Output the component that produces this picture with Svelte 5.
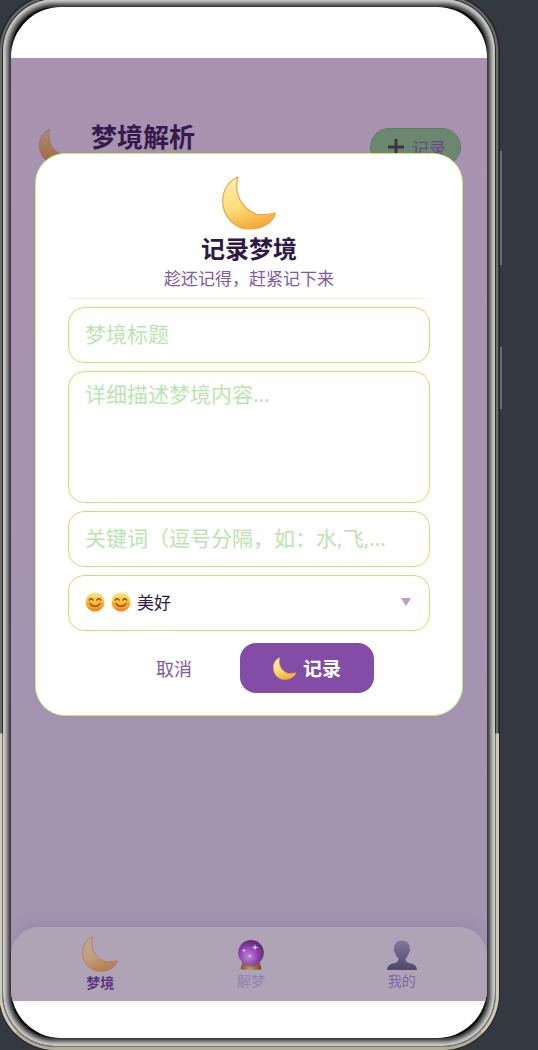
<script lang="ts">
  let title = $state('');
  let content = $state('');
  let keywords = $state('');
  let mood = $state('good');

  const moods = [
    { value: 'good', label: '美好' },
    { value: 'calm', label: '平静' },
    { value: 'scary', label: '恐惧' },
  ];

  const tabs = [
    { id: 'dream', label: '梦境' },
    { id: 'explain', label: '解梦' },
    { id: 'mine', label: '我的' },
  ];

  let active = $state('dream');
</script>

{#snippet moon(fill: string, edge: string)}
  <svg class="moon" viewBox="0 0 54 54" aria-hidden="true">
    <path
      d="M16 1C6 5 .7 15 .7 25 .7 41 13 53 28 53c13 0 23-7 25.500-16C47 38.500 40 39.500 34 38 20 33 11 17 16 1Z"
      fill="url(#{fill})"
      stroke={edge}
      stroke-width="1.200"
      stroke-linejoin="round"
    />
  </svg>
{/snippet}

{#snippet smile()}
  <svg class="smile" viewBox="0 0 20 20" aria-hidden="true">
    <circle cx="10" cy="10" r="9.500" fill="url(#face)" />
    <ellipse cx="4.200" cy="11.500" rx="2.200" ry="1.600" fill="#f8842c" opacity=".6" />
    <ellipse cx="15.800" cy="11.500" rx="2.200" ry="1.600" fill="#f8842c" opacity=".6" />
    <path
      d="M4.200 8.200c.8-2 3-2 3.900 0M11.900 8.200c.8-2 3-2 3.900 0M5.500 12c2 3 7 3 9 0"
      fill="none"
      stroke="#6b3412"
      stroke-width="1.200"
      stroke-linecap="round"
    />
  </svg>
{/snippet}

<svg class="defs" aria-hidden="true">
  <defs>
    <linearGradient id="moon-bright" x1=".3" y1="0" x2=".6" y2="1">
      <stop offset="0" stop-color="#fdeeb0" />
      <stop offset=".55" stop-color="#fbdc76" />
      <stop offset="1" stop-color="#f3a635" />
    </linearGradient>
    <linearGradient id="moon-dim" x1=".3" y1="0" x2=".6" y2="1">
      <stop offset="0" stop-color="#c0a694" />
      <stop offset=".55" stop-color="#c09d7c" />
      <stop offset="1" stop-color="#b87a4d" />
    </linearGradient>
    <linearGradient id="moon-shade" x1=".3" y1="0" x2=".3" y2="1">
      <stop offset="0" stop-color="#a78b7e" />
      <stop offset="1" stop-color="#a5673d" />
    </linearGradient>
    <linearGradient id="face" x1="0" y1="0" x2="0" y2="1">
      <stop offset="0" stop-color="#ffe88c" />
      <stop offset=".5" stop-color="#fcc03a" />
      <stop offset="1" stop-color="#f08018" />
    </linearGradient>
    <radialGradient id="ball" cx=".4" cy=".65" r=".65">
      <stop offset="0" stop-color="#b58fcc" />
      <stop offset=".5" stop-color="#9a45b8" />
      <stop offset="1" stop-color="#5a2a70" />
    </radialGradient>
    <linearGradient id="stand" x1="0" y1="0" x2="1" y2="0">
      <stop offset="0" stop-color="#80502f" />
      <stop offset=".45" stop-color="#c09a68" />
      <stop offset="1" stop-color="#704225" />
    </linearGradient>
    <linearGradient id="bust" x1="0" y1="0" x2="0" y2="1">
      <stop offset="0" stop-color="#80779f" />
      <stop offset="1" stop-color="#514766" />
    </linearGradient>
  </defs>
</svg>

<div class="stage" lang="zh-CN">
  <div class="phone">
    <div class="screen">
      <div class="app">
        <header class="top">
          <span class="logo">{@render moon('moon-shade', '#a36b48')}</span>
          <h1>梦境解析</h1>
          <button class="add" type="button">
            <svg viewBox="0 0 16 16" aria-hidden="true">
              <path d="M8 1v14M1 8h14" stroke="#3b3346" stroke-width="3" stroke-linecap="round" />
            </svg>
            记录
          </button>
        </header>

        <nav class="tabs">
          {#each tabs as tab}
            <button
              class="tab {tab.id}"
              class:active={active === tab.id}
              type="button"
              onclick={() => (active = tab.id)}
            >
              {#if tab.id === 'dream'}
                {@render moon('moon-dim', '#b47b50')}
              {:else if tab.id === 'explain'}
                <svg class="icon" viewBox="0 0 30 30" aria-hidden="true">
                  <path d="M6.500 22h17l1.800 6c.2 1-1 1.700-2 1.700H6.700c-1 0-2.200-.7-2-1.700Z" fill="url(#stand)" />
                  <circle cx="15" cy="12.800" r="12.800" fill="url(#ball)" />
                  <path d="M6 24.800q9 3 18 0" fill="none" stroke="#8a6248" />
                  <path
                    d="m19 4 .8 2.700 2.700.8-2.700.8L19 11l-.8-2.700-2.700-.8 2.700-.8ZM8 8l.6 1.900 1.900.6-1.900.6L8 13l-.6-1.900-1.900-.6 1.900-.6ZM14 14l.5 1.500 1.500.5-1.500.5-.5 1.500-.5-1.500-1.500-.5 1.500-.5Z"
                    fill="#e2c8e8"
                  />
                </svg>
              {:else}
                <svg class="icon" viewBox="0 0 30 30" aria-hidden="true">
                  <path
                    d="M15 .5c5 0 8 3.500 7.700 8 1 .4.600 3-.7 4-.5 2.500-2 4.500-3.500 6 0 3 1.500 4 4.500 4.800 4 .8 6.500 2 7 6.700H0c.5-4.700 3-5.900 7-6.700 3-.8 4.500-1.800 4.500-4.800-1.500-1.500-3-3.500-3.500-6-1.300-1-1.700-3.600-.7-4C7 4 10 .5 15 .5Z"
                    fill="url(#bust)"
                  />
                </svg>
              {/if}
              <span>{tab.label}</span>
            </button>
          {/each}
        </nav>

        <div class="overlay">
          <form class="modal" onsubmit={(e) => e.preventDefault()}>
            <div class="head">
              {@render moon('moon-bright', '#eda440')}
              <h2>记录梦境</h2>
              <p>趁还记得，赶紧记下来</p>
            </div>

            <div class="fields">
              <input class="field" type="text" aria-label="梦境标题" placeholder="梦境标题" bind:value={title} />
              <textarea class="field" aria-label="梦境内容" placeholder="详细描述梦境内容..." bind:value={content}></textarea>
              <input
                class="field"
                type="text"
                aria-label="关键词"
                placeholder="关键词（逗号分隔，如：水,飞,…"
                bind:value={keywords}
              />
              <div class="field mood">
                {@render smile()}
                {@render smile()}
                <select aria-label="梦境情绪" bind:value={mood}>
                  {#each moods as m}
                    <option value={m.value}>{m.label}</option>
                  {/each}
                </select>
                <svg class="arrow" viewBox="0 0 10 8" aria-hidden="true">
                  <path d="M0 0h10L5 8Z" fill="#b39bdc" />
                </svg>
              </div>
            </div>

            <div class="actions">
              <button class="cancel" type="button">取消</button>
              <button class="save" type="submit">
                {@render moon('moon-bright', '#eda440')}
                记录
              </button>
            </div>
          </form>
        </div>
      </div>
    </div>
    <span class="side-key volume"></span>
    <span class="side-key power"></span>
  </div>
</div>

<style>
  :global(body) {
    background: #343840;
  }

  .stage,
  .stage :global(*) {
    box-sizing: border-box;
  }

  .stage {
    min-height: 100vh;
    display: flex;
    padding: 7px 51px 12px 11px;
    overflow: hidden;
    background: #343840;
    font-family: 'Noto Sans', 'Noto Sans CJK SC', sans-serif;
  }

  h1, h2, p { margin: 0; }

  button, input, textarea, select {
    font-family: inherit;
    margin: 0;
  }

  button {
    border: 0;
    padding: 0;
    background: none;
    cursor: pointer;
  }

  svg {
    display: block;
    flex: none;
  }

  .defs {
    position: absolute;
    width: 0;
    height: 0;
  }

  /* metal frame, drawn as rings from the glass outwards */
  .phone {
    position: relative;
    flex: 1;
    display: flex;
    border-radius: 44px;
    background: #0c0c0c;
    box-shadow:
      0 0 0 1px #3c3c3c,
      0 0 0 2px #4c4c4c,
      0 0 0 3px #666,
      0 0 0 4px #808080,
      0 0 0 5px #999,
      0 0 0 6px #b0b0b0,
      0 0 0 8px #c4c4c4,
      0 0 0 9px #2a2a2a,
      0 0 0 11px #6e6d6a,
      0 0 0 12px #3a3a3a,
      0 0 0 13px #222;
  }

  /* lower part of the frame is champagne coloured */
  .phone::after {
    content: '';
    position: absolute;
    inset: -12px;
    border: 3px solid #cfc8b8;
    border-bottom-color: #b5ac9a;
    border-radius: 56px;
    box-shadow: inset 0 0 0 1px #777;
    clip-path: inset(70% 0 0 0);
    pointer-events: none;
  }

  .side-key {
    position: absolute;
    right: -15px;
    width: 2px;
    background: #6c6f73;
  }
  .volume {
    top: 14%;
    height: 11%;
  }
  .power {
    top: 33%;
    height: 6%;
  }

  .screen {
    flex: 1;
    min-width: 0;
    display: flex;
    flex-direction: column;
    padding: 51px 0 37px;
    border-radius: 50px;
    background: #fff;
    overflow: hidden;
  }

  .app {
    position: relative;
    flex: 1;
    display: flex;
    flex-direction: column;
    justify-content: space-between;
    background: linear-gradient(#a892b0, #a294b0);
  }

  .top {
    display: flex;
    align-items: flex-start;
    padding: 62px 26px 0 28px;
  }

  .logo {
    width: 52px;
    padding-top: 9px;
  }
  .logo :global(.moon) {
    width: 36px;
    height: 36px;
  }

  h1 {
    flex: 1;
    font-size: 26px;
    line-height: 34px;
    color: #351a4d;
  }

  .add {
    display: flex;
    align-items: center;
    gap: 8px;
    height: 38px;
    margin-top: 8px;
    padding: 0 14px 0 17px;
    border: 1px solid #5f7c62;
    border-radius: 19px;
    background: #6b8770;
    font-size: 17px;
    color: #6b458c;
  }
  .add svg {
    width: 16px;
    height: 16px;
  }

  .tabs {
    display: flex;
    height: 74px;
    padding: 0 10px 0 14px;
    border-radius: 28px 28px 0 0;
    background: #afa3b6;
    box-shadow: 0 -4px 12px rgba(120, 90, 150, 0.2);
  }

  .tab {
    flex: 1;
    display: flex;
    flex-direction: column;
    align-items: center;
    padding-top: 13px;
    font-size: 14px;
    line-height: 22px;
    color: #9580b1;
  }
  .tab.mine { color: #7f67a4; }
  .tab.active {
    padding-top: 9px;
    font-weight: 700;
    color: #5c3482;
  }
  .tab :global(.moon) {
    width: 36px;
    height: 36px;
  }
  .icon {
    width: 30px;
    height: 30px;
  }

  .overlay {
    position: absolute;
    inset: 0;
    padding: 95px 24px 0;
  }

  .modal {
    padding: 22px 32px;
    border: 1px solid #c8e480;
    border-radius: 30px;
    background: #fff;
  }

  .head {
    display: flex;
    flex-direction: column;
    align-items: center;
    padding-bottom: 8px;
    border-bottom: 1px solid #f1f8cf;
  }
  .head :global(.moon) {
    width: 54px;
    height: 54px;
  }

  h2 {
    font-size: 24px;
    line-height: 38px;
    color: #2e1844;
  }

  p {
    font-size: 17px;
    line-height: 22px;
    color: #8159a5;
  }

  .fields {
    display: flex;
    flex-direction: column;
    gap: 8px;
    padding: 8px 0 12px;
  }

  .field {
    display: block;
    width: 100%;
    height: 56px;
    padding: 0 16px 2px;
    border: 1px solid #c6e26c;
    border-radius: 16px;
    background: #fff;
    font-size: 21px;
    color: #2e1844;
    outline: none;
  }
  .field::placeholder {
    color: #bbe4b0;
    opacity: 1;
  }

  textarea.field {
    height: 132px;
    padding-top: 8px;
    line-height: 28px;
    resize: none;
  }

  .mood {
    display: flex;
    align-items: center;
    gap: 6px;
  }
  .smile {
    width: 20px;
    height: 20px;
  }

  select {
    flex: 1;
    min-width: 0;
    height: 100%;
    padding: 0;
    border: 0;
    background: none;
    font-size: 17px;
    color: #2e1844;
    appearance: none;
    outline: none;
  }

  .arrow {
    width: 10px;
    height: 8px;
    margin-right: 2px;
  }

  .actions {
    display: flex;
    justify-content: center;
    gap: 16px;
  }
  .actions button {
    height: 50px;
    border-radius: 16px;
  }

  .cancel {
    width: 100px;
    font-size: 18px;
    color: #8159a5;
  }

  .save {
    display: flex;
    align-items: center;
    justify-content: center;
    gap: 7px;
    width: 134px;
    background: #834da7;
    font-size: 19px;
    font-weight: 700;
    color: #fff;
  }
  .save :global(.moon) {
    width: 23px;
    height: 23px;
  }
</style>
